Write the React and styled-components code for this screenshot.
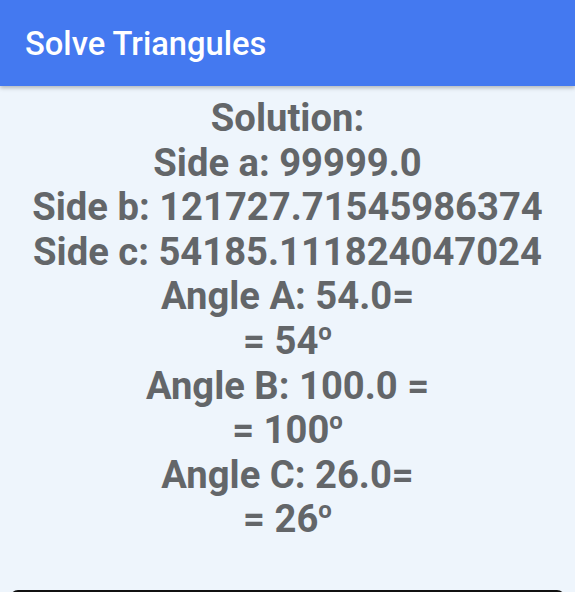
import React from 'react'
import styled, { createGlobalStyle } from 'styled-components'

const GlobalStyle = createGlobalStyle`
    html, body {
        margin: 0;
        padding: 0;
        background-color: #eef5fc;
        font-family: Roboto, "Liberation Sans", sans-serif;
    }
`

const solution = [
    'Solution:',
    'Side a: 99999.0',
    'Side b: 121727.71545986374',
    'Side c: 54185.111824047024',
    'Angle A: 54.0=',
    { deg: '54' },
    'Angle B: 100.0 =',
    { deg: '100' },
    'Angle C: 26.0=',
    { deg: '26' },
]

function App() {
    return (
        <Page>
            <GlobalStyle />
            <Header>
                <Title>Solve Triangules</Title>
            </Header>
            <Result>
                {solution.map((line, i) =>
                    typeof line === 'string' ? (
                        <Line key={i}>{line}</Line>
                    ) : (
                        <Line key={i}>
                            = {line.deg}
                            <Degree>o</Degree>
                        </Line>
                    )
                )}
            </Result>
            <BottomBar />
        </Page>
    )
}

export default App

const Page = styled.div`
    width: 575px;
    height: 592px;
    display: flex;
    flex-direction: column;
    overflow: hidden;
    background-color: #eef5fc;
`

const Header = styled.div`
    height: 86px;
    flex-shrink: 0;
    display: flex;
    align-items: center;
    padding-left: 25px;
    padding-top: 2px;
    box-sizing: border-box;
    background-color: #4479f0;
    box-shadow: 0 2px 4px rgba(0, 0, 0, 0.25);
    position: relative;
    z-index: 1;
`

const Title = styled.div`
    color: white;
    font-size: 32.7px;
    font-weight: 500;
`

const Result = styled.div`
    flex: 1;
    display: flex;
    flex-direction: column;
    align-items: center;
    padding-top: 10px;
`

const Line = styled.div`
    color: #636669;
    font-size: 38.2px;
    font-weight: 700;
    line-height: 44.6px;
    white-space: nowrap;
`

const Degree = styled.span`
    font-size: 24px;
    vertical-align: 14px;
    line-height: 0;
`

const BottomBar = styled.div`
    height: 10px;
    margin: 0 10px -8px;
    flex-shrink: 0;
    background-color: #111;
    border-radius: 8px 8px 0 0;
`
